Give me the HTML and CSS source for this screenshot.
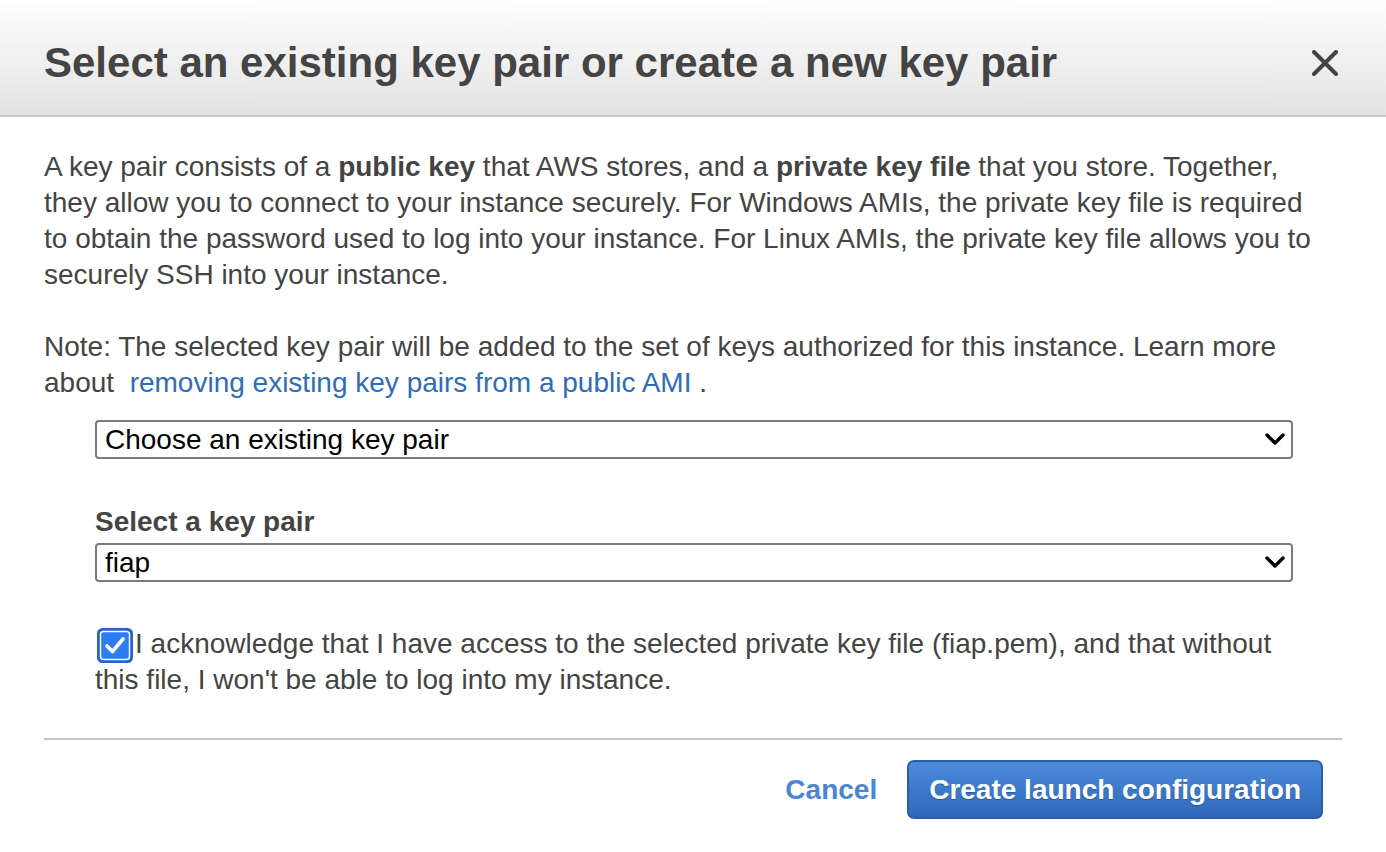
FILE: index.html
```html
<!DOCTYPE html>
<html lang="en">
<head>
    <meta charset="UTF-8">
    <meta name="viewport" content="width=device-width, initial-scale=1.0">
    <title>Select key pair</title>
    <link rel="stylesheet" href="styles.css">
</head>
<body>
    <div class="dialog">
        <div class="dialog-header">
            <h1>Select an existing key pair or create a new key pair</h1>
            <button class="close" aria-label="Close">
                <svg width="26" height="26" viewBox="0 0 26 26"><path d="M2 2 L24 24 M24 2 L2 24" stroke="#444" stroke-width="4" stroke-linecap="round"/></svg>
            </button>
        </div>
        <div class="dialog-body">
            <p class="intro">A key pair consists of a <b>public key</b> that AWS stores, and a <b>private key file</b> that you store. Together, they allow you to connect to your instance securely. For Windows AMIs, the private key file is required to obtain the password used to log into your instance. For Linux AMIs, the private key file allows you to securely SSH into your instance.</p>
            <p class="intro">Note: The selected key pair will be added to the set of keys authorized for this instance. Learn more about <a href="#">&nbsp;removing existing key pairs from a public AMI&nbsp;</a>.</p>

            <div class="form">
                <div class="select-wrap">
                    <select>
                        <option selected>Choose an existing key pair</option>
                        <option>Create a new key pair</option>
                        <option>Proceed without a key pair</option>
                    </select>
                    <svg class="chevron" width="20" height="14" viewBox="0 0 20 14"><path d="M2 3 L10 11 L18 3" fill="none" stroke="#000" stroke-width="3.4" stroke-linecap="round" stroke-linejoin="round"/></svg>
                </div>

                <label class="field-label">Select a key pair</label>
                <div class="select-wrap">
                    <select>
                        <option selected>fiap</option>
                    </select>
                    <svg class="chevron" width="20" height="14" viewBox="0 0 20 14"><path d="M2 3 L10 11 L18 3" fill="none" stroke="#000" stroke-width="3.4" stroke-linecap="round" stroke-linejoin="round"/></svg>
                </div>

                <label class="ack">
                    <span class="checkbox">
                        <svg width="38" height="37" viewBox="0 0 38 37">
                            <rect x="1" y="1" width="36" height="35" rx="5.5" fill="#2763c8"/>
                            <rect x="4.5" y="4.5" width="29" height="28" rx="3" fill="#2d7cf2" stroke="#fff" stroke-width="1.4"/>
                            <path d="M11 19 L16.5 24.5 L27 12" fill="none" stroke="#fff" stroke-width="3.6" stroke-linecap="round" stroke-linejoin="round"/>
                        </svg>
                    </span>I acknowledge that I have access to the selected private key file (fiap.pem), and that without this file, I won't be able to log into my instance.
                </label>
            </div>
        </div>
        <div class="dialog-footer">
            <a href="#" class="cancel">Cancel</a>
            <button class="primary">Create launch configuration</button>
        </div>
    </div>
</body>
</html>
```

FILE: styles.css
```css
body {
    font-family: "Liberation Sans", Arial, Helvetica, sans-serif;
    background: white;
    color: #444;
    margin: 0;
    padding: 0;
}
.dialog-header {
    display: flex;
    align-items: center;
    justify-content: space-between;
    height: 117px;
    padding: 10px 48px 0 44px;
    box-sizing: border-box;
    background: linear-gradient(#fefefe, #e3e3e3);
    border-bottom: 2px solid #c9c9c9;
}
.dialog-header h1 {
    margin: 0;
    font-size: 42px;
    font-weight: bold;
    color: #444;
}
.close {
    background: none;
    border: none;
    padding: 0;
    cursor: pointer;
    display: flex;
}
.dialog-body {
    padding: 32px 44px 0 44px;
    font-size: 28px;
    line-height: 36px;
}
.intro {
    margin: 0 13px 36px 0;
}
.intro:last-of-type {
    margin-bottom: 19px;
}
.dialog-body a {
    color: #2f6db4;
    text-decoration: none;
}
.form {
    padding: 0 49px 0 51px;
}
.select-wrap {
    position: relative;
}
.select-wrap select {
    appearance: none;
    -webkit-appearance: none;
    box-sizing: border-box;
    width: 100%;
    height: 39px;
    padding: 0 40px 0 8px;
    font-family: inherit;
    font-size: 28px;
    color: #000;
    background: white;
    border: 2px solid #7b7b7b;
    border-radius: 4px;
    display: block;
}
.chevron {
    position: absolute;
    right: 8px;
    top: 12px;
    pointer-events: none;
}
.field-label {
    display: block;
    margin-top: 45px;
    margin-bottom: 3px;
    font-weight: bold;
    color: #444;
}
.ack {
    display: block;
    margin-top: 44px;
    margin-bottom: 40px;
}
.checkbox {
    display: inline-block;
    width: 38px;
    height: 37px;
    margin: -5px 1px -5px 1px;
    vertical-align: -6px;
}
.checkbox svg {
    display: block;
}
.dialog-footer {
    margin: 0 44px;
    border-top: 2px solid #c2c2c2;
    padding: 20px 19px 20px 0;
    display: flex;
    justify-content: flex-end;
    align-items: center;
    gap: 30px;
}
.cancel {
    font-size: 28px;
    font-weight: bold;
    color: #4a86d2;
    text-decoration: none;
}
.primary {
    box-sizing: border-box;
    height: 59px;
    padding: 0 20px;
    font-family: inherit;
    font-size: 28px;
    font-weight: bold;
    color: white;
    background: linear-gradient(#4c8bda, #2f68b9);
    border: 2px solid #2b5ea9;
    border-radius: 7px;
    text-shadow: 0 1px 1px rgba(0, 0, 0, 0.25);
    cursor: pointer;
}
```
